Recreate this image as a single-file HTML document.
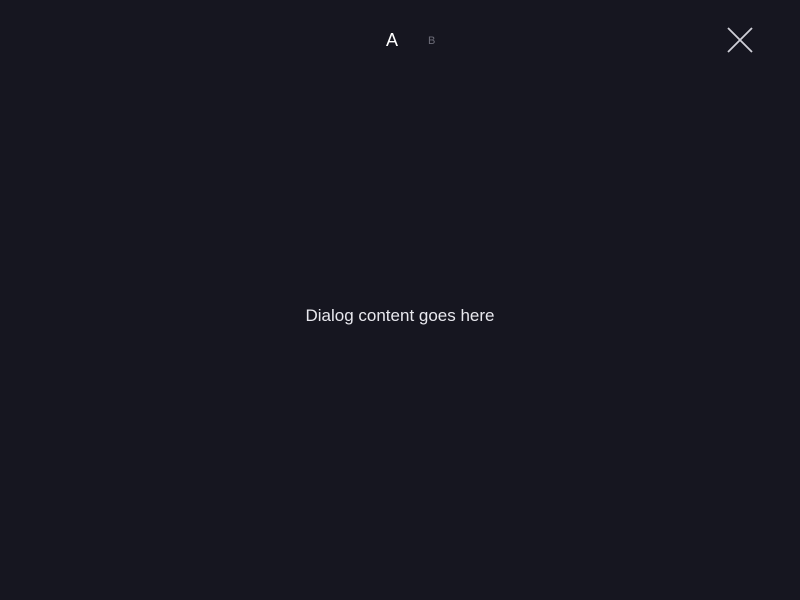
<!DOCTYPE html>
<html><head><style>
html,body{margin:0;padding:0;width:800px;height:600px;background:#161620;overflow:hidden;font-family:"Liberation Sans",sans-serif;}
.a{position:absolute;left:386px;top:30px;font-size:18px;color:#fff;}
.b{position:absolute;left:428px;top:35px;font-size:11px;color:#6c6c78;}
.t{position:absolute;left:0;width:800px;top:306px;text-align:center;font-size:17px;color:#e8e8ee;}
svg{position:absolute;left:726px;top:26px;}
</style></head><body>
<div class="a">A</div><div class="b">B</div>
<svg width="28" height="28" viewBox="0 0 28 28"><path d="M2 2L26 26M26 2L2 26" stroke="#d0d0d8" stroke-width="1.8"/></svg>
<div class="t">Dialog content goes here</div>
</body></html>
